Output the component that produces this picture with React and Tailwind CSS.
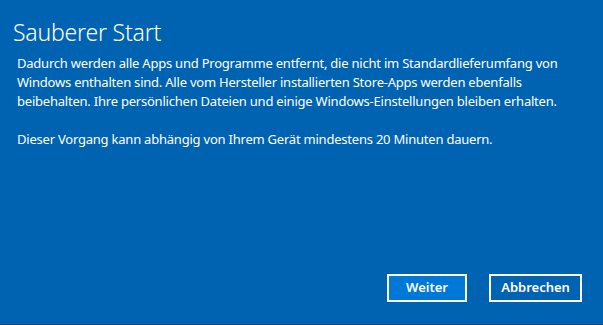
export default function App() {
  return (
    <div className="w-[603px] h-[325px] bg-[#0063b1] text-white flex flex-col border-b border-[#0d4a7c]" style={{ fontFamily: '"Segoe UI", "Noto Sans", "Open Sans", sans-serif' }}>
      <div className="pl-[13px] pt-[17px] text-[23px] leading-[30px] font-light tracking-[-0.2px]">Sauberer Start</div>
      <div className="pl-[17px] pt-[7px] text-[13px] leading-[19px] tracking-[-0.22px]">
        <p>Dadurch werden alle Apps und Programme entfernt, die nicht im Standardlieferumfang von<br />Windows enthalten sind. Alle vom Hersteller installierten Store-Apps werden ebenfalls<br />beibehalten. Ihre persönlichen Dateien und einige Windows-Einstellungen bleiben erhalten.</p>
        <p className="mt-[19px]">Dieser Vorgang kann abhängig von Ihrem Gerät mindestens 20 Minuten dauern.</p>
      </div>
      <div className="flex-1" />
      <div className="flex justify-end gap-[22px] pr-[21px] pb-[22px]">
        <button className="w-[80px] h-[28px] bg-[#0078d7] border-2 border-white text-[13px] font-semibold">Weiter</button>
        <button className="w-[93px] h-[28px] border-2 border-white text-[13px] font-semibold">Abbrechen</button>
      </div>
    </div>
  );
}
